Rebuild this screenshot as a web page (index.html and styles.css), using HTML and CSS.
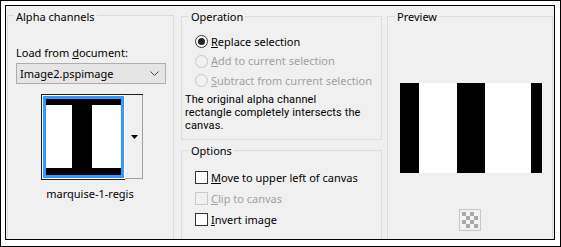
FILE: index.html
```html
<!DOCTYPE html>
<html>
<head>
<meta charset="utf-8">
<link rel="stylesheet" href="styles.css">
</head>
<body>
<div class="frame">
  <div class="dialog">
    <section class="grp alpha">
      <div class="title">Alpha channels</div>
      <div class="lbl">Load from <u>d</u>ocument:</div>
      <div class="select">
        <span>Image2.pspimage</span>
        <svg class="chev" width="9" height="6" viewBox="0 0 9 6"><path d="M0.5 0.5 L4.5 4.5 L8.5 0.5" fill="none" stroke="#444" stroke-width="1"/></svg>
      </div>
      <div class="thumbwrap">
        <div class="thumb">
          <div class="sel">
            <svg width="75" height="76" viewBox="0 0 75 76">
              <rect x="0" y="0" width="75" height="76" fill="#fff"/>
              <rect x="0" y="0" width="75" height="6" fill="#000"/>
              <rect x="0" y="69" width="75" height="7" fill="#000"/>
              <rect x="26" y="0" width="20" height="76" fill="#000"/>
            </svg>
          </div>
        </div>
        <div class="tbtn">
          <svg width="7" height="4" viewBox="0 0 7 4"><path d="M0 0 H7 L3.5 4 Z" fill="#000"/></svg>
        </div>
      </div>
      <div class="caption">marquise-1-regis</div>
    </section>

    <div class="mid">
      <section class="grp op">
        <div class="title">Operation</div>
        <div class="row r1"><span class="radio on"></span><span><u>R</u>eplace selection</span></div>
        <div class="row off"><span class="radio"></span><span><u>A</u>dd to current selection</span></div>
        <div class="row off"><span class="radio"></span><span><u>S</u>ubtract from current selection</span></div>
        <div class="desc">
          <div class="dl">The original alpha channel</div>
          <div class="dl">rectangle completely intersects the</div>
          <div class="dl">canvas.</div>
        </div>
      </section>
      <section class="grp opts">
        <div class="title">Options</div>
        <div class="crow c1"><span class="check"></span><span><u>M</u>ove to upper left of canvas</span></div>
        <div class="crow off"><span class="check"></span><span><u>C</u>lip to canvas</span></div>
        <div class="crow"><span class="check"></span><span><u>I</u>nvert image</span></div>
      </section>
    </div>

    <section class="grp preview">
      <div class="title">Preview</div>
      <svg class="pimg" width="142" height="90" viewBox="0 0 142 90">
        <rect x="0" y="0" width="142" height="90" fill="#fff"/>
        <rect x="0" y="0" width="19" height="90" fill="#000"/>
        <rect x="57" y="0" width="28" height="90" fill="#000"/>
        <rect x="131" y="0" width="11" height="90" fill="#000"/>
      </svg>
      <div class="checker">
        <svg width="16" height="16" viewBox="0 0 16 16">
          <rect width="16" height="16" fill="#f4f4f4"/>
          <rect x="0" y="0" width="4" height="4" fill="#a9a9a9"/>
          <rect x="8" y="0" width="4" height="4" fill="#a9a9a9"/>
          <rect x="4" y="4" width="4" height="4" fill="#a9a9a9"/>
          <rect x="12" y="4" width="4" height="4" fill="#a9a9a9"/>
          <rect x="0" y="8" width="4" height="4" fill="#a9a9a9"/>
          <rect x="8" y="8" width="4" height="4" fill="#a9a9a9"/>
          <rect x="4" y="12" width="4" height="4" fill="#a9a9a9"/>
          <rect x="12" y="12" width="4" height="4" fill="#a9a9a9"/>
        </svg>
      </div>
    </section>
  </div>
</div>
</body>
</html>
```

FILE: styles.css
```css
* { box-sizing: border-box; }
html, body { margin: 0; padding: 0; background: #fff; }
body {
  font-family: "Noto Sans", "Open Sans", sans-serif;
  font-size: 11px;
  line-height: 16px;
  color: #000;
}
.frame {
  width: 561px;
  height: 247px;
  border: 1px solid #000;
  padding: 4px 4px 6px 4px;
  background: #fff;
}
.dialog {
  width: 550px;
  height: 235px;
  border: 1px solid #000;
  background: #f0f0f0;
  display: flex;
  align-items: flex-start;
  overflow: hidden;
}
.grp {
  border: 1px solid #dcdcdc;
}
.title {
  width: max-content;
  background: #f0f0f0;
  padding: 0 2px;
  line-height: 16px;
}
/* Alpha channels group */
.alpha {
  margin: 9px 0 0 1px;
  width: 167px;
  height: 240px;
  padding: 0 0 0 6px;
}
.alpha .title { margin-top: -7px; }
.lbl { margin: 20px 0 0 2px; }
.select {
  margin: 2px 0 0 2px;
  width: 150px;
  height: 21px;
  border: 1px solid #adadad;
  background: #e5e5e5;
  display: flex;
  align-items: center;
  justify-content: space-between;
  padding: 0 6px 0 3px;
}
.chev { display: block; }
.thumbwrap {
  margin: 10px 0 0 27px;
  width: 102px;
  height: 86px;
  display: flex;
  border-top: 1px solid #1e1e1e;
  border-left: 1px solid #1e1e1e;
}
.thumb {
  padding: 1px;
  background: #fff;
  border-bottom: 1px solid #1e1e1e;
}
.sel {
  border: 3px solid #3399ff;
}
.sel svg { display: block; }
.tbtn {
  width: 18px;
  height: 84px;
  background: #f0f0f0;
  border-right: 1px solid #a0a0a0;
  border-bottom: 1px solid #a0a0a0;
  display: flex;
  align-items: center;
  justify-content: center;
}
.tbtn svg { display: block; margin-left: 1px; }
.caption {
  margin-top: 6px;
  width: 152px;
  text-align: center;
}
/* Middle column */
.mid {
  margin-left: 7px;
  width: 201px;
  display: flex;
  flex-direction: column;
}
.op {
  margin-top: 10px;
  height: 124px;
  padding: 0 0 0 7px;
}
.op .title { margin-top: -8px; }
.row {
  display: flex;
  align-items: center;
  height: 19.5px;
  margin-left: 6px;
}
.row.r1 { margin-top: 7px; }
.off { color: #a0a0a0; }
.radio {
  width: 13px;
  height: 13px;
  border: 1px solid #333;
  border-radius: 50%;
  background: #fff;
  margin-right: 3px;
  display: flex;
  align-items: center;
  justify-content: center;
  flex: none;
}
.radio.on::after {
  content: "";
  width: 7px;
  height: 7px;
  border-radius: 50%;
  background: #222;
}
.off .radio { border-color: #c8c8c8; background: #f0f0f0; }
.desc {
  margin: 2px 0 0 -4px;
  font-family: Roboto, "Noto Sans", sans-serif;
  font-size: 11px;
  letter-spacing: 0.12px;
}
.dl {
  height: 13px;
  line-height: 13px;
  white-space: nowrap;
}
.opts {
  margin-top: 10px;
  height: 100px;
  padding: 0 0 0 7px;
}
.opts .title { margin-top: -8px; }
.crow {
  display: flex;
  align-items: center;
  height: 21px;
  margin-left: 6px;
}
.crow.c1 { margin-top: 8px; }
.check {
  width: 13px;
  height: 13px;
  border: 1px solid #333;
  background: #fff;
  margin-right: 3px;
  flex: none;
}
.off .check { border-color: #c8c8c8; background: #f0f0f0; }
/* Preview */
.preview {
  margin: 10px 0 0 5px;
  width: 166px;
  height: 240px;
  padding: 0 0 0 7px;
}
.preview .title { margin-top: -8px; }
.pimg { display: block; margin: 58px 0 0 5px; }
.checker {
  margin: 36px 0 0 64px;
  width: 22px;
  height: 22px;
  border: 1px solid #c8c8c8;
  padding: 2px;
}
.checker svg { display: block; }
```
